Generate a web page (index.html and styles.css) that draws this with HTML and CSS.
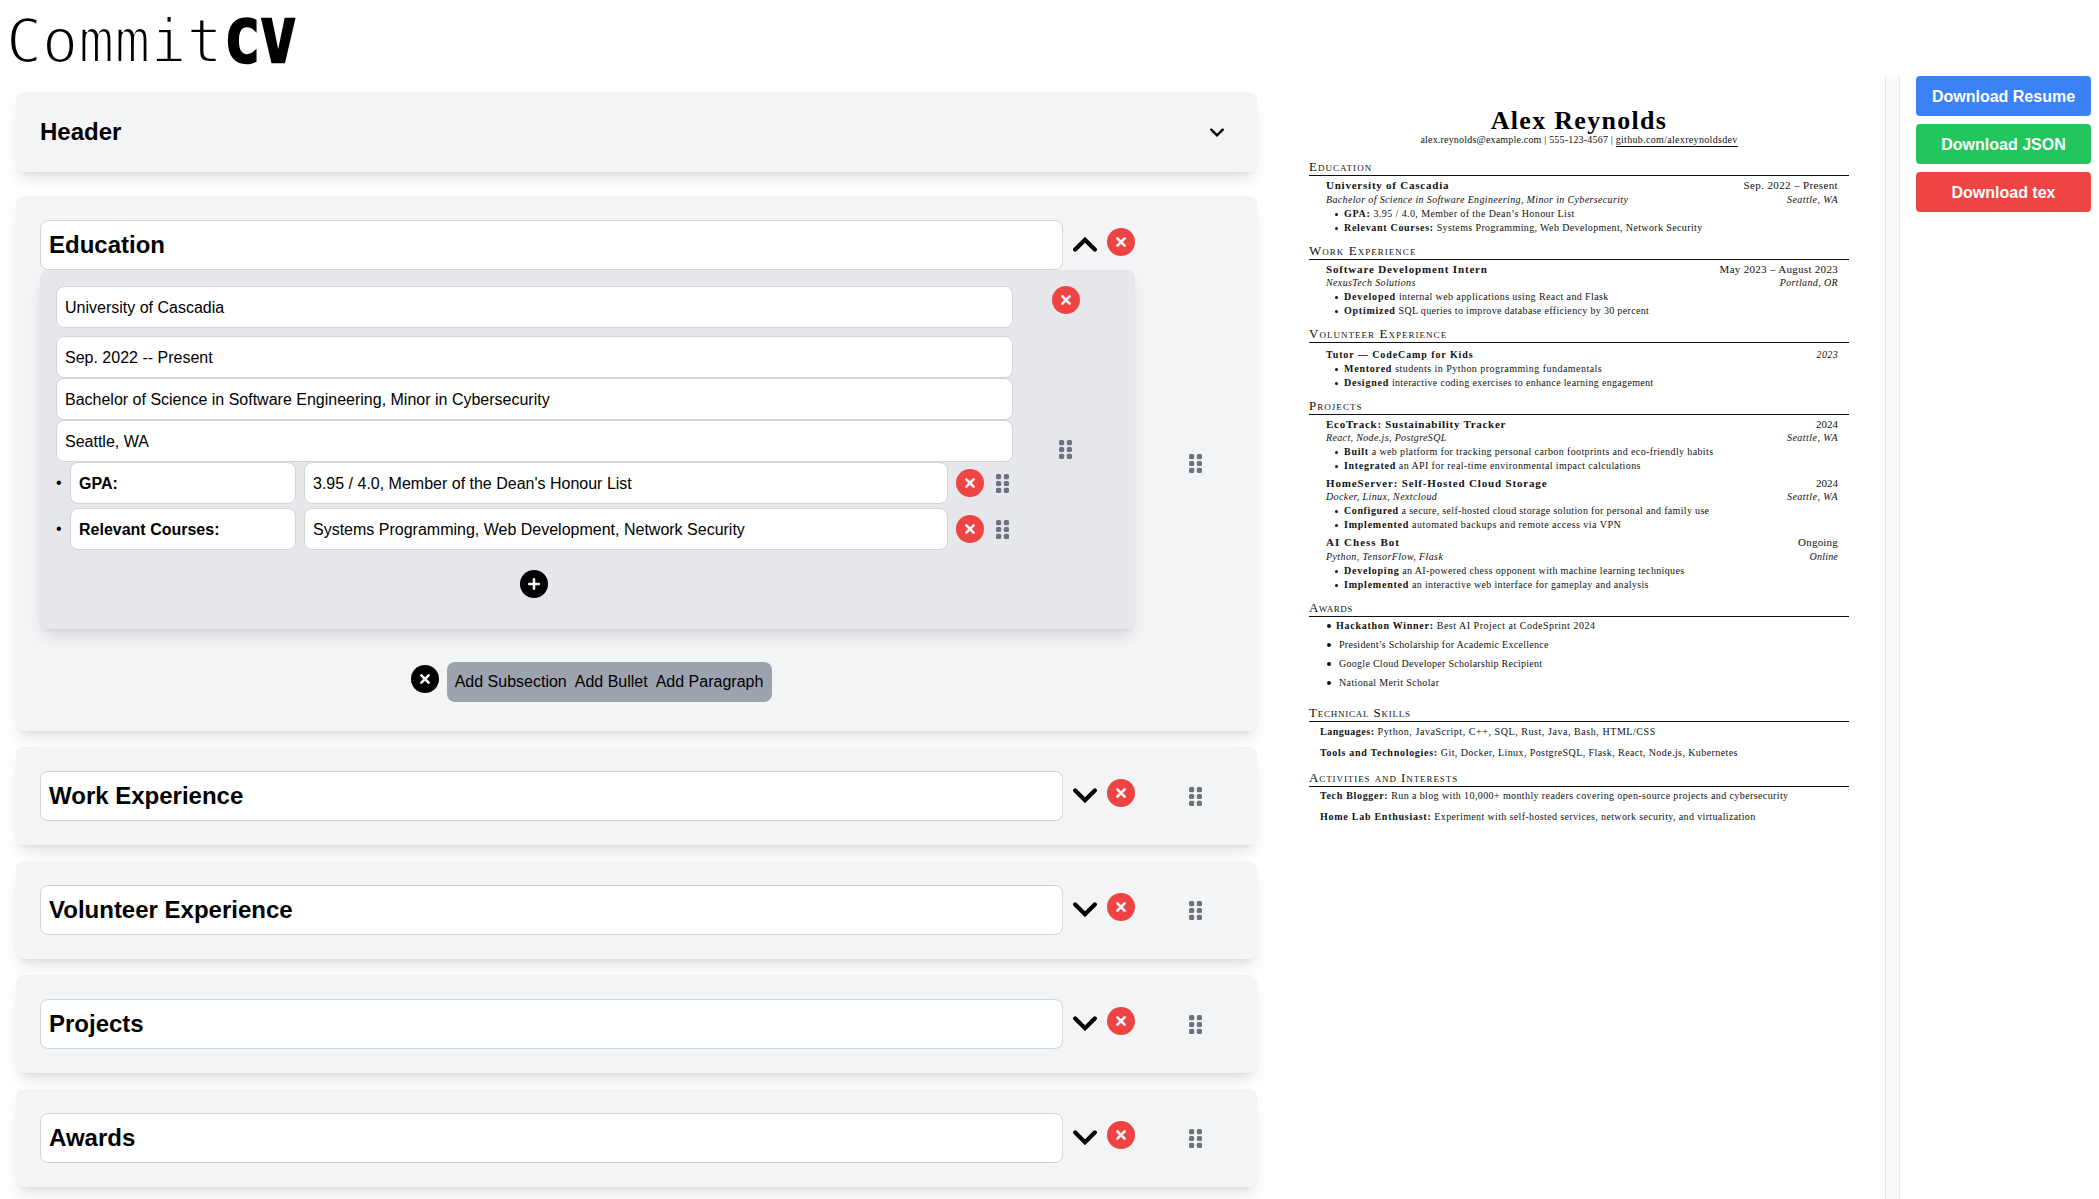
FILE: index.html
```html
<!DOCTYPE html>
<html lang="en">
<head>
<meta charset="utf-8">
<title>CommitCV</title>
<link rel="stylesheet" href="styles.css">
</head>
<body>
<svg class="defs" aria-hidden="true">
  <symbol id="grip" viewBox="0 0 13 19"><g fill="currentColor"><rect width="5.2" height="5.2" rx="1.5"/><rect x="7.8" width="5.2" height="5.2" rx="1.5"/><rect y="6.9" width="5.2" height="5.2" rx="1.5"/><rect x="7.8" y="6.9" width="5.2" height="5.2" rx="1.5"/><rect y="13.8" width="5.2" height="5.2" rx="1.5"/><rect x="7.8" y="13.8" width="5.2" height="5.2" rx="1.5"/></g></symbol>
  <symbol id="cross" viewBox="0 0 28 28"><path d="M10.4 10.4l7.2 7.2M17.6 10.4l-7.2 7.2" stroke="currentColor" stroke-width="2.7" stroke-linecap="round"/></symbol>
  <symbol id="plus" viewBox="0 0 28 28"><path d="M14 9.2v9.6M9.2 14h9.6" stroke="currentColor" stroke-width="2.6" stroke-linecap="round"/></symbol>
  <symbol id="down" viewBox="0 0 24 15"><path d="M2.2 2.4L12 12.2L21.8 2.4" fill="none" stroke="currentColor" stroke-width="4.2" stroke-linecap="round"/></symbol>
</svg>
<header class="brand">Commit<b>CV</b></header>
<main class="workspace">
  <section class="editor">
    <div class="card card-header"><h2>Header</h2><svg class="mini-chevron" viewBox="0 0 24 15"><use href="#down"/></svg></div>

    <div class="card section open">
      <div class="content">
        <div class="title-row"><div class="field big">Education</div><svg class="chevron up"><use href="#down"/></svg><svg class="dot red"><use href="#cross"/></svg></div>
        <div class="panel">
          <div class="fields">
            <div class="field first">University of Cascadia</div>
            <div class="field">Sep. 2022 -- Present</div>
            <div class="field">Bachelor of Science in Software Engineering, Minor in Cybersecurity</div>
            <div class="field">Seattle, WA</div>
            <div class="bullet-row"><span class="mark">•</span><div class="field label">GPA:</div><div class="field grow">3.95 / 4.0, Member of the Dean's Honour List</div><svg class="dot red"><use href="#cross"/></svg><svg class="grip"><use href="#grip"/></svg></div>
            <div class="bullet-row"><span class="mark">•</span><div class="field label">Relevant Courses:</div><div class="field grow">Systems Programming, Web Development, Network Security</div><svg class="dot red"><use href="#cross"/></svg><svg class="grip"><use href="#grip"/></svg></div>
            <svg class="dot black add"><use href="#plus"/></svg>
          </div>
          <div class="panel-side"><svg class="dot red"><use href="#cross"/></svg><svg class="grip"><use href="#grip"/></svg></div>
        </div>
        <div class="add-row"><svg class="dot black"><use href="#cross"/></svg><div class="menu"><span>Add Subsection</span><span>Add Bullet</span><span>Add Paragraph</span></div></div>
      </div>
      <div class="handle"><svg class="grip"><use href="#grip"/></svg></div>
    </div>

    <div class="card section"><div class="content"><div class="title-row"><div class="field big">Work Experience</div><svg class="chevron"><use href="#down"/></svg><svg class="dot red"><use href="#cross"/></svg></div></div><div class="handle"><svg class="grip"><use href="#grip"/></svg></div></div>
    <div class="card section"><div class="content"><div class="title-row"><div class="field big">Volunteer Experience</div><svg class="chevron"><use href="#down"/></svg><svg class="dot red"><use href="#cross"/></svg></div></div><div class="handle"><svg class="grip"><use href="#grip"/></svg></div></div>
    <div class="card section"><div class="content"><div class="title-row"><div class="field big">Projects</div><svg class="chevron"><use href="#down"/></svg><svg class="dot red"><use href="#cross"/></svg></div></div><div class="handle"><svg class="grip"><use href="#grip"/></svg></div></div>
    <div class="card section"><div class="content"><div class="title-row"><div class="field big">Awards</div><svg class="chevron"><use href="#down"/></svg><svg class="dot red"><use href="#cross"/></svg></div></div><div class="handle"><svg class="grip"><use href="#grip"/></svg></div></div>
  </section>

  <article class="resume">
    <h1>Alex Reynolds</h1>
    <p class="contact"><span>alex.reynolds@example.com | 555-123-4567 | </span><u>github.com/alexreynoldsdev</u></p>

    <section class="edu">
      <h3>Education</h3>
      <div class="line lead"><b class="ls-77">University of Cascadia</b><span>Sep. 2022 – Present</span></div>
      <div class="line sub"><i class="ls-35">Bachelor of Science in Software Engineering, Minor in Cybersecurity</i><i class="ls-46">Seattle, WA</i></div>
      <ul><li><b>GPA:</b><span class="ls-40"> 3.95 / 4.0, Member of the Dean’s Honour List</span></li><li><b class="ls-70">Relevant Courses:</b><span> Systems Programming, Web Development, Network Security</span></li></ul>
    </section>
    <section class="work">
      <h3>Work Experience</h3>
      <div class="line lead"><b>Software Development Intern</b><span class="ls-30">May 2023 – August 2023</span></div>
      <div class="line sub tight"><i>NexusTech Solutions</i><i>Portland, OR</i></div>
      <ul><li><b class="ls-84">Developed</b><span class="ls-40"> internal web applications using React and Flask</span></li><li><b>Optimized</b><span class="ls-33"> SQL queries to improve database efficiency by 30 percent</span></li></ul>
    </section>
    <section class="vol">
      <h3>Volunteer Experience</h3>
      <div class="line small"><b class="ls-91">Tutor — CodeCamp for Kids</b><i>2023</i></div>
      <ul><li><b class="ls-77">Mentored</b><span class="ls-46"> students in Python programming fundamentals</span></li><li><b class="ls-77">Designed</b><span class="ls-32"> interactive coding exercises to enhance learning engagement</span></li></ul>
    </section>
    <section class="proj">
      <h3>Projects</h3>
      <div class="line lead"><b class="ls-72">EcoTrack: Sustainability Tracker</b><span class="ls-0">2024</span></div>
      <div class="line sub tight"><i class="ls-35">React, Node.js, PostgreSQL</i><i class="ls-46">Seattle, WA</i></div>
      <ul><li><b>Built</b><span class="ls-38"> a web platform for tracking personal carbon footprints and eco-friendly habits</span></li><li><b class="ls-70">Integrated</b><span class="ls-40"> an API for real-time environmental impact calculations</span></li></ul>
      <div class="line lead next"><b>HomeServer: Self-Hosted Cloud Storage</b><span class="ls-0">2024</span></div>
      <div class="line sub tight"><i class="ls-40">Docker, Linux, Nextcloud</i><i class="ls-46">Seattle, WA</i></div>
      <ul><li><b class="ls-60">Configured</b><span class="ls-33"> a secure, self-hosted cloud storage solution for personal and family use</span></li><li><b class="ls-77">Implemented</b><span class="ls-46"> automated backups and remote access via VPN</span></li></ul>
      <div class="line lead next"><b class="ls-100">AI Chess Bot</b><span class="ls-20">Ongoing</span></div>
      <div class="line sub"><i class="ls-40">Python, TensorFlow, Flask</i><i class="ls-20">Online</i></div>
      <ul><li><b class="ls-77">Developing</b><span class="ls-35"> an AI-powered chess opponent with machine learning techniques</span></li><li><b class="ls-77">Implemented</b><span class="ls-35"> an interactive web interface for gameplay and analysis</span></li></ul>
    </section>
    <section class="awards">
      <h3 class="ls-46">Awards</h3>
      <ul class="wide"><li class="titled"><b class="ls-72">Hackathon Winner:</b><span class="ls-51"> Best AI Project at CodeSprint 2024</span></li><li><span class="ls-28">President’s Scholarship for Academic Excellence</span></li><li><span class="ls-28">Google Cloud Developer Scholarship Recipient</span></li><li><span>National Merit Scholar</span></li></ul>
    </section>
    <section class="skills">
      <h3 class="ls-77">Technical Skills</h3>
      <p><b class="ls-51">Languages:</b><span class="ls-56"> Python, JavaScript, C++, SQL, Rust, Java, Bash, HTML/CSS</span></p>
      <p><b class="ls-72">Tools and Technologies:</b><span class="ls-41"> Git, Docker, Linux, PostgreSQL, Flask, React, Node.js, Kubernetes</span></p>
    </section>
    <section class="acts">
      <h3 class="ls-91">Activities and Interests</h3>
      <p><b class="ls-70">Tech Blogger:</b><span class="ls-39"> Run a blog with 10,000+ monthly readers covering open-source projects and cybersecurity</span></p>
      <p><b>Home Lab Enthusiast:</b><span class="ls-36"> Experiment with self-hosted services, network security, and virtualization</span></p>
    </section>
  </article>
  <div class="gutter"></div>
  <aside class="actions"><button class="blue">Download Resume</button><button class="green">Download JSON</button><button class="crimson">Download tex</button></aside>
</main>
</body>
</html>
```
FILE: styles.css
```css
* { box-sizing: border-box; margin: 0; padding: 0; }
body { height: 1199px; overflow: hidden; background: #fff; color: #000; font: 16px/24px "Liberation Sans", Arial, sans-serif; }
.defs { position: absolute; width: 0; height: 0; }
svg { display: block; flex: none; }

.brand { height: 76px; padding-left: 6px; font: 60px/82px "DejaVu Sans Mono", monospace; -webkit-text-stroke: 2.1px #fff; }
.brand b { margin-left: 2px; font-size: 58px; letter-spacing: 1px; -webkit-text-stroke: 2.4px #000; }

.workspace { display: grid; grid-template-columns: 1273px 612px 15px 1fr; height: 1123px; }

/* Editor column */
.editor { display: flex; flex-direction: column; gap: 16px; padding: 16px; }
.card { flex: none; background: #f3f4f6; border-radius: 8px; box-shadow: 0 10px 15px -3px rgb(0 0 0 / .1), 0 4px 6px -4px rgb(0 0 0 / .1); }
.card-header { display: flex; align-items: center; justify-content: space-between; height: 80px; padding: 0 33px 0 24px; margin-bottom: 8px; }
.card-header h2 { font-size: 24px; line-height: 32px; }
.mini-chevron { width: 14px; height: 9px; }
.section { display: flex; padding: 24px 0 24px 24px; }
.content { width: 1095px; }
.handle { flex: 1; display: flex; align-items: center; justify-content: center; padding-right: 2px; }
.title-row { display: flex; height: 50px; }
.field { height: 42px; padding: 9px 8px 7px; background: #fff; border: 1px solid #d1d5db; border-radius: 8px; line-height: 24px; white-space: nowrap; }
.field.big { width: 1023px; height: 50px; padding: 8px; font-size: 24px; font-weight: 700; line-height: 32px; }
.chevron { width: 24px; height: 15px; margin: 17px 10px 0; }
.chevron.up { transform: rotate(180deg); }
.dot { width: 28px; height: 28px; border-radius: 50%; }
.title-row .dot { margin-top: 8px; }
.red { background: #ef4444; color: #f3f4f6; }
.black { background: #000; color: #f3f4f6; }
.grip { width: 13px; height: 19px; color: #6b7280; }

.panel { display: flex; height: 359px; padding: 16px; background: #e5e7eb; border-radius: 8px; box-shadow: 0 10px 15px -3px rgb(0 0 0 / .1), 0 4px 6px -4px rgb(0 0 0 / .1); }
.fields { width: 957px; }
.field.first { margin-bottom: 8px; }
.bullet-row { display: flex; align-items: center; height: 42px; margin-bottom: 4px; }
.mark { width: 14px; }
.field.label { width: 226px; margin-right: 8px; font-weight: 700; }
.field.grow { width: 644px; margin-right: 8px; }
.bullet-row .grip { margin-left: 12px; }
.add { margin: 20px auto 0 464px; }
.panel-side { flex: 1; display: grid; grid-template-rows: 1fr auto 1fr; justify-items: center; }
.panel-side .grip { margin-right: 1px; }

.add-row { display: flex; justify-content: center; gap: 8px; padding: 33px 0 5px 8px; }
.add-row .dot { margin-top: 3px; }
.menu { display: flex; gap: 8px; padding: 8px 9px 8px 8px; background: #9ca3af; border-radius: 8px; }

/* Download actions */
.gutter { background: #fafafa; border: solid #e7e7e7; border-width: 0 1px; }
.actions { display: flex; flex-direction: column; gap: 8px; padding: 0 8px 0 16px; }
.actions button { height: 40px; padding-top: 2px; border: 0; border-radius: 4px; color: #fff; font: 700 16px/24px "Liberation Sans", Arial, sans-serif; }
.blue { background: #3b82f6; }
.green { background: #22c55e; }
.crimson { background: #ef4444; }

/* Resume preview */
.resume { padding: 32px 36px 0; font: 10px/14px "Liberation Serif", "Times New Roman", serif; letter-spacing: .37px; color: #111; }
.resume span { white-space: pre; }
.resume b { letter-spacing: .74px; }
.resume h1 { height: 25px; font-size: 26px; line-height: 26px; letter-spacing: 1.3px; text-align: center; color: #000; }
.contact { height: 14px; text-align: center; letter-spacing: .19px; }
.contact u { text-decoration: none; border-bottom: 1px solid #111; padding-bottom: 1px; letter-spacing: .32px; }
.resume h3 { height: 17px; border-bottom: 1px solid #111; font-size: 13px; font-weight: 400; font-variant: small-caps; line-height: 16px; letter-spacing: 1.03px; }
.line { display: flex; justify-content: space-between; height: 14px; padding: 0 11px 0 17px; }
.lead { margin-top: 2px; font-size: 11px; }
.resume .lead b { letter-spacing: .84px; }
.lead.next { margin-top: 3px; }
.sub { margin-top: 1px; }
.sub.tight { margin-top: 0; }
.small { margin-top: 5px; }
.resume ul { list-style: none; padding-left: 35px; }
.resume li { position: relative; height: 14px; }
.resume li::before { content: ""; position: absolute; left: -9px; top: 6px; width: 3px; height: 3px; border-radius: 50%; background: #111; }
.resume .wide { margin-top: 2px; padding-left: 30px; }
.resume .wide li { height: 19px; }
.wide li.titled { margin-left: -3px; }
.resume .wide li::before { left: -12px; top: 5px; width: 4px; height: 4px; }
.resume .wide li.titled::before { left: -9px; }
.edu { margin-top: 12px; }
.work, .vol, .proj, .awards { margin-top: 8px; }
.skills { margin-top: 10px; }
.acts { margin-top: 3px; }
.skills p, .acts p { height: 21px; padding-left: 11px; }
.skills h3 { margin-bottom: 3px; }
.acts h3 { margin-bottom: 2px; }

/* Tracking steps */
.resume .line .ls-0 { letter-spacing: 0; }
.resume .line .ls-20 { letter-spacing: .2px; }
.resume .ls-28 { letter-spacing: .28px; }
.resume .ls-30 { letter-spacing: .3px; }
.resume .ls-32 { letter-spacing: .32px; }
.resume .ls-33 { letter-spacing: .33px; }
.resume .ls-35 { letter-spacing: .35px; }
.resume .ls-36 { letter-spacing: .36px; }
.resume .ls-38 { letter-spacing: .38px; }
.resume .ls-39 { letter-spacing: .39px; }
.resume .ls-40 { letter-spacing: .4px; }
.resume .ls-41 { letter-spacing: .41px; }
.resume .ls-46 { letter-spacing: .46px; }
.resume .ls-51 { letter-spacing: .51px; }
.resume .ls-56 { letter-spacing: .56px; }
.resume .ls-60 { letter-spacing: .6px; }
.resume .ls-70 { letter-spacing: .69px; }
.resume .ls-72 { letter-spacing: .72px; }
.resume .ls-77 { letter-spacing: .77px; }
.resume .ls-84 { letter-spacing: .84px; }
.resume .ls-91 { letter-spacing: .91px; }
.resume .line .ls-72 { letter-spacing: .72px; }
.resume .line .ls-77 { letter-spacing: .77px; }
.resume .line .ls-100 { letter-spacing: 1.02px; }
```
